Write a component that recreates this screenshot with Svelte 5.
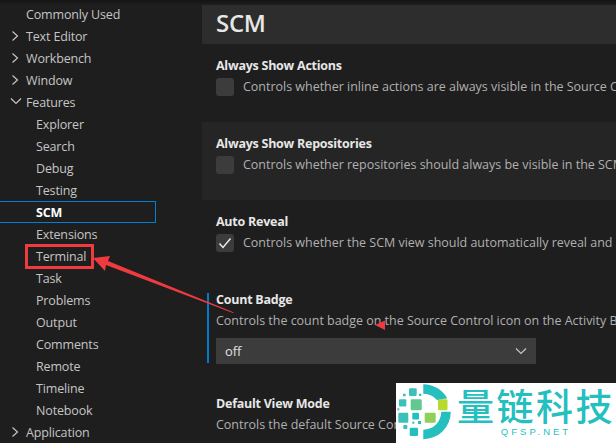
<script>
  const tree = [
    { label: 'Commonly Used', depth: 0 },
    { label: 'Text Editor', depth: 0, twist: 'right' },
    { label: 'Workbench', depth: 0, twist: 'right' },
    { label: 'Window', depth: 0, twist: 'right' },
    { label: 'Features', depth: 0, twist: 'down' },
    { label: 'Explorer', depth: 1 },
    { label: 'Search', depth: 1 },
    { label: 'Debug', depth: 1 },
    { label: 'Testing', depth: 1 },
    { label: 'SCM', depth: 1, active: true },
    { label: 'Extensions', depth: 1 },
    { label: 'Terminal', depth: 1 },
    { label: 'Task', depth: 1 },
    { label: 'Problems', depth: 1 },
    { label: 'Output', depth: 1 },
    { label: 'Comments', depth: 1 },
    { label: 'Remote', depth: 1 },
    { label: 'Timeline', depth: 1 },
    { label: 'Notebook', depth: 1 },
    { label: 'Application', depth: 0, twist: 'right' }
  ];
</script>

<div class="page">
  <nav class="tree">
    {#each tree as item}
      <div class="row" class:active={item.active} class:sub={item.depth === 1}>
        {#if item.twist === 'right'}
          <svg class="twist" width="10" height="12" viewBox="0 0 10 12"><path d="M2.5 1.5 L7.5 6 L2.5 10.5" /></svg>
        {:else if item.twist === 'down'}
          <svg class="twist" width="12" height="10" viewBox="0 0 12 10"><path d="M1 2.5 L6 7.5 L11 2.5" /></svg>
        {/if}
        <span>{item.label}</span>
      </div>
    {/each}
  </nav>

  <main class="content">
    <div class="title">SCM</div>

    <section class="setting">
      <h3>Always Show Actions</h3>
      <div class="check-line">
        <span class="box"></span>
        <span class="desc">Controls whether inline actions are always visible in the Source Control view.</span>
      </div>
    </section>

    <section class="setting hover">
      <h3>Always Show Repositories</h3>
      <div class="check-line">
        <span class="box"></span>
        <span class="desc">Controls whether repositories should always be visible in the SCM view.</span>
      </div>
    </section>

    <section class="setting">
      <h3>Auto Reveal</h3>
      <div class="check-line">
        <span class="box">
          <svg width="18" height="18" viewBox="0 0 18 18"><path d="M3.5 9.5 L7 13.5 L14.5 4.5" /></svg>
        </span>
        <span class="desc">Controls whether the SCM view should automatically reveal and select files when opening them.</span>
      </div>
    </section>

    <section class="setting focused">
      <h3>Count Badge</h3>
      <div class="desc">Controls the count badge on the Source Control icon on the Activity Bar.</div>
      <div class="select">
        <span>off</span>
        <svg width="12" height="8" viewBox="0 0 12 8"><path d="M1 1.5 L6 6.5 L11 1.5" /></svg>
      </div>
    </section>

    <section class="setting last">
      <h3>Default View Mode</h3>
      <div class="desc">Controls the default Source Control repository view mode.</div>
    </section>
  </main>

  <svg class="marks" width="616" height="443" viewBox="0 0 616 443">
    <rect x="26.5" y="245.5" width="66" height="22" fill="none" stroke="#ef3b3f" stroke-width="3" />
    <path d="M93 258 L110 256 L108 261 L234 312.5 L233 313 L106 265 L105 271 Z" fill="#ef3b3f" />
    <path d="M375 325 L385 320.5 L385 330 Z" fill="#ef3b3f" />
  </svg>

  <div class="logo">
    <svg class="mark" width="54" height="56" viewBox="0 0 54 56">
      <path d="M26.3 0.2 A27.5 27.5 0 0 1 50.3 14.3 L40.3 16.3 A18 18 0 0 0 26.3 9.7 Z" fill="#25bfc0" />
      <path d="M53.8 27.7 A27.5 27.5 0 0 1 26.3 55.2 L26.3 45.7 A18 18 0 0 0 44.3 27.7 Z" fill="#25bfc0" />
      <rect x="12" y="4.3" width="7.7" height="7.7" rx="1.2" fill="#3cc0b8" />
      <rect x="22" y="9.7" width="2.3" height="2.3" fill="#3cc0b8" />
      <rect x="6" y="9.7" width="2.6" height="2.6" fill="#3cc0b8" />
      <rect x="2" y="15.3" width="7.3" height="7.3" rx="1" fill="#3cc0b8" />
      <rect x="13.7" y="15.3" width="11" height="11" rx="1.2" fill="#62c890" />
      <rect x="0.3" y="24.3" width="2" height="2" fill="#3cc0b8" />
      <rect x="1.3" y="28.7" width="10" height="10" rx="1.2" fill="#3cc0b8" />
      <rect x="15.3" y="28.7" width="6.7" height="6.7" rx="1" fill="#25bfc0" />
      <rect x="27.7" y="28.7" width="11" height="10" rx="1.2" fill="#8fd05c" />
      <rect x="41" y="15.3" width="9.5" height="11" rx="1.2" fill="#b8d92e" />
      <rect x="6.3" y="41" width="4" height="4" rx="0.8" fill="#3cc0b8" />
      <rect x="12.7" y="43.7" width="8.3" height="8.3" rx="1.2" fill="#25bfc0" />
      <rect x="21" y="37" width="3" height="3" fill="#25bfc0" />
      <rect x="15.3" y="37.7" width="2" height="2" fill="#25bfc0" />
    </svg>
    <div class="brand">
      <div class="cn">量链科技</div>
      <div class="en">QFSP.NET</div>
    </div>
  </div>
</div>

<style>
  :global(body) {
    margin: 0;
    background: #1e1e1e;
  }

  .page {
    position: relative;
    width: 616px;
    height: 443px;
    overflow: hidden;
    display: flex;
    background: #1e1e1e;
    font-family: "Open Sans", "Noto Sans", sans-serif;
    font-size: 12.5px;
    letter-spacing: -0.15px;
    color: #cccccc;
  }

  .page::before {
    content: "";
    position: absolute;
    left: 0;
    top: 0;
    width: 100%;
    height: 4px;
    background: linear-gradient(#141414, #1c1c1c);
  }

  .tree {
    width: 202px;
    flex: none;
    padding-top: 3px;
  }

  .row {
    position: relative;
    height: 22px;
    width: 156px;
    box-sizing: border-box;
    padding-left: 26px;
    line-height: 24px;
    color: #c5c5c5;
  }

  .row.sub {
    padding-left: 36px;
  }

  .row.active {
    border: 1px solid #007fd4;
    border-left: none;
    line-height: 21px;
    font-weight: 700;
    color: #ffffff;
  }

  .twist {
    position: absolute;
    left: 10px;
    top: 5px;
    fill: none;
    stroke: #c5c5c5;
    stroke-width: 1.2;
  }

  .content {
    flex: 1;
    min-width: 0;
    padding-top: 5px;
  }

  .title {
    height: 39px;
    background: #2d2d2d;
    padding-left: 14px;
    font-size: 24px;
    font-weight: 600;
    letter-spacing: -0.3px;
    line-height: 35px;
    color: #e7e7e7;
  }

  .setting {
    box-sizing: border-box;
    height: 78px;
    padding: 13px 14px 0;
    white-space: nowrap;
  }

  .setting.hover {
    background: #252525;
  }

  .setting.focused {
    height: 104px;
    position: relative;
  }

  .setting.focused::before {
    content: "";
    position: absolute;
    left: 5px;
    top: 15px;
    width: 2px;
    height: 70px;
    background: #007acc;
  }

  h3 {
    margin: 0;
    font-size: 12.5px;
    line-height: 18px;
    font-weight: 700;
    letter-spacing: -0.25px;
    color: #e7e7e7;
  }

  .check-line {
    display: flex;
    align-items: center;
    gap: 9px;
    margin-top: 3px;
  }

  .box {
    width: 18px;
    height: 18px;
    flex: none;
    border-radius: 3px;
    background: #3c3c3c;
  }

  .box svg {
    display: block;
    fill: none;
    stroke: #f0f0f0;
    stroke-width: 1.4;
  }

  .desc {
    color: #b0b0b0;
    line-height: 18px;
    letter-spacing: -0.02px;
  }

  .focused .desc,
  .last .desc {
    margin-top: 3px;
  }

  .select {
    width: 320px;
    height: 26px;
    margin-top: 8px;
    box-sizing: border-box;
    padding: 0 9px;
    display: flex;
    align-items: center;
    justify-content: space-between;
    background: #3c3c3c;
    color: #e0e0e0;
    font-size: 13px;
  }

  .select svg {
    fill: none;
    stroke: #c5c5c5;
    stroke-width: 1.2;
  }

  .marks {
    position: absolute;
    left: 0;
    top: 0;
    pointer-events: none;
  }

  .logo {
    position: absolute;
    left: 396px;
    top: 383px;
    width: 220px;
    height: 60px;
    background: #ffffff;
    display: flex;
    gap: 6px;
    padding: 1px 0 0 1px;
    box-sizing: border-box;
    letter-spacing: 0;
  }

  .brand {
    display: flex;
    flex-direction: column;
    align-items: center;
    color: #25bfc0;
    white-space: nowrap;
  }

  .cn {
    font-family: "Noto Sans CJK SC", sans-serif;
    font-size: 37px;
    font-weight: 500;
    line-height: 42px;
    letter-spacing: 2.5px;
  }

  .en {
    font-family: "Liberation Sans", sans-serif;
    font-size: 9.5px;
    line-height: 12px;
    letter-spacing: 3px;
  }
</style>
